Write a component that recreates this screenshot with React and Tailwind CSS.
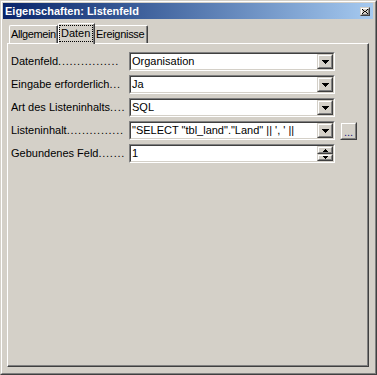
import React from 'react'

function Raised({ className, children }) {
    return (
        <div className={`border border-t-[#d4d0c8] border-l-[#d4d0c8] border-b-[#404040] border-r-[#404040] ${className}`}>
            <div className="w-full h-full border border-t-white border-l-white border-b-[#808080] border-r-[#808080] bg-[#d4d0c8] flex items-center justify-center">
                {children}
            </div>
        </div>
    )
}

function ArrowDown({ w = 7 }) {
    return (
        <svg width={w} height={Math.ceil(w / 2)} viewBox={`0 0 ${w} ${Math.ceil(w / 2)}`} shapeRendering="crispEdges">
            {Array.from({ length: Math.ceil(w / 2) }).map((_, i) => (
                <rect key={i} x={i} y={i} width={w - i * 2} height="1" fill="#000" />
            ))}
        </svg>
    )
}

function ArrowUp({ w = 5 }) {
    const h = Math.ceil(w / 2)
    return (
        <svg width={w} height={h} viewBox={`0 0 ${w} ${h}`} shapeRendering="crispEdges">
            {Array.from({ length: h }).map((_, i) => (
                <rect key={i} x={i} y={h - 1 - i} width={w - i * 2} height="1" fill="#000" />
            ))}
        </svg>
    )
}

function Field({ children, spin }) {
    return (
        <div className="w-[206px] h-[19px] border border-t-[#808080] border-l-[#808080] border-b-white border-r-white">
            <div className="h-full flex border border-t-[#404040] border-l-[#404040] border-b-[#d4d0c8] border-r-[#d4d0c8] bg-white">
                <div className="flex-1 min-w-0 pl-[1px] text-[11px] leading-[15px] text-black whitespace-nowrap">
                    {children}
                </div>
                {spin ? (
                    <div className="w-[16px] h-full flex flex-col">
                        <Raised className="w-full h-[8px]">
                            <ArrowUp />
                        </Raised>
                        <Raised className="w-full h-[7px]">
                            <ArrowDown w={5} />
                        </Raised>
                    </div>
                ) : (
                    <Raised className="w-[16px] h-full">
                        <ArrowDown />
                    </Raised>
                )}
            </div>
        </div>
    )
}

function Row({ label, dots, children, extra }) {
    return (
        <div className="flex items-center h-[19px]">
            <div className="w-[118px]">
                <div className="w-[116px] overflow-hidden whitespace-nowrap text-[11px] text-black">
                    {label}
                    <span className="tracking-[0.75px]">{'.'.repeat(dots)}</span>
                </div>
            </div>
            {children}
            {extra}
        </div>
    )
}

export default function App() {
    return (
        <div className="w-[377px] h-[375px] bg-[#d4d0c8] border border-t-[#d4d0c8] border-l-[#d4d0c8] border-b-[#404040] border-r-[#404040] font-['Liberation_Sans',Arial,sans-serif] select-none">
            <div className="h-full flex flex-col border border-t-white border-l-white border-b-[#808080] border-r-[#808080] pt-[1px] pl-[1px] pr-[2px]">
                {/* -- Title bar -- */}
                <div className="h-[16px] flex items-center justify-between bg-gradient-to-r from-[#0a246a] to-[#a6caf0]">
                    <span className="pl-[2px] text-[11px] font-bold text-white leading-none">
                        Eigenschaften: Listenfeld
                    </span>
                    <Raised className="w-[10px] h-[9px] mr-[3px]">
                        <svg width="6" height="5" viewBox="0 0 6 5" shapeRendering="crispEdges">
                            <path d="M0 0h1v1h-1zM5 0h1v1h-1zM1 1h1v1h-1zM4 1h1v1h-1zM2 2h2v1h-2zM1 3h1v1h-1zM4 3h1v1h-1zM0 4h1v1h-1zM5 4h1v1h-1z" fill="#000" />
                        </svg>
                    </Raised>
                </div>

                <div className="flex-1 flex flex-col pl-[4px] pr-[4px] pt-[4px] pb-[6px]">
                    {/* -- Tabs -- */}
                    <div className="flex items-end h-[20px] pl-[2px]">
                        <div className="w-[49px] h-[18px] border-t border-l border-t-white border-l-white border-r border-r-[#404040] rounded-tl-[2px]">
                            <div className="h-full border-r border-r-[#808080] pl-[1px] text-[11px] leading-[17px] tracking-[-0.4px] text-black whitespace-nowrap">
                                Allgemein
                            </div>
                        </div>
                        <div className="relative z-10 w-[37px] h-[21px] -mb-[1px] bg-[#d4d0c8] border-t border-l border-t-white border-l-white border-r border-r-[#404040] rounded-tl-[2px]">
                            <div className="h-full border-r border-r-[#808080] pt-[1px]">
                                <div className="w-[34px] h-[17px] border border-dotted border-black text-[11px] leading-[15px] text-black pl-[1px] whitespace-nowrap">
                                    Daten
                                </div>
                            </div>
                        </div>
                        <div className="w-[53px] h-[18px] border-t border-t-white border-r border-r-[#404040] rounded-tr-[2px]">
                            <div className="h-full border-r border-r-[#808080] pl-[1px] text-[11px] leading-[17px] tracking-[-0.3px] text-black whitespace-nowrap">
                                Ereignisse
                            </div>
                        </div>
                    </div>

                    {/* -- Tab page -- */}
                    <div className="flex-1 border border-t-white border-l-white border-b-[#404040] border-r-[#404040]">
                        <div className="h-full border-b border-r border-b-[#808080] border-r-[#808080] pt-[8px] pl-[3px] flex flex-col gap-[4px]">
                            <Row label="Datenfeld" dots={16}>
                                <Field>Organisation</Field>
                            </Row>
                            <Row label="Eingabe erforderlich" dots={3}>
                                <Field>Ja</Field>
                            </Row>
                            <Row label="Art des Listeninhalts" dots={4}>
                                <Field>SQL</Field>
                            </Row>
                            <Row
                                label="Listeninhalt"
                                dots={15}
                                extra={
                                    <Raised className="w-[17px] h-[18px] ml-[5px]">
                                        <span className="text-[11px] leading-none text-[#202080] pt-[3px]">...</span>
                                    </Raised>
                                }
                            >
                                <Field>"SELECT "tbl_land"."Land" || ', ' ||</Field>
                            </Row>
                            <Row label="Gebundenes Feld" dots={7}>
                                <Field spin>1</Field>
                            </Row>
                        </div>
                    </div>
                </div>
            </div>
        </div>
    )
}
